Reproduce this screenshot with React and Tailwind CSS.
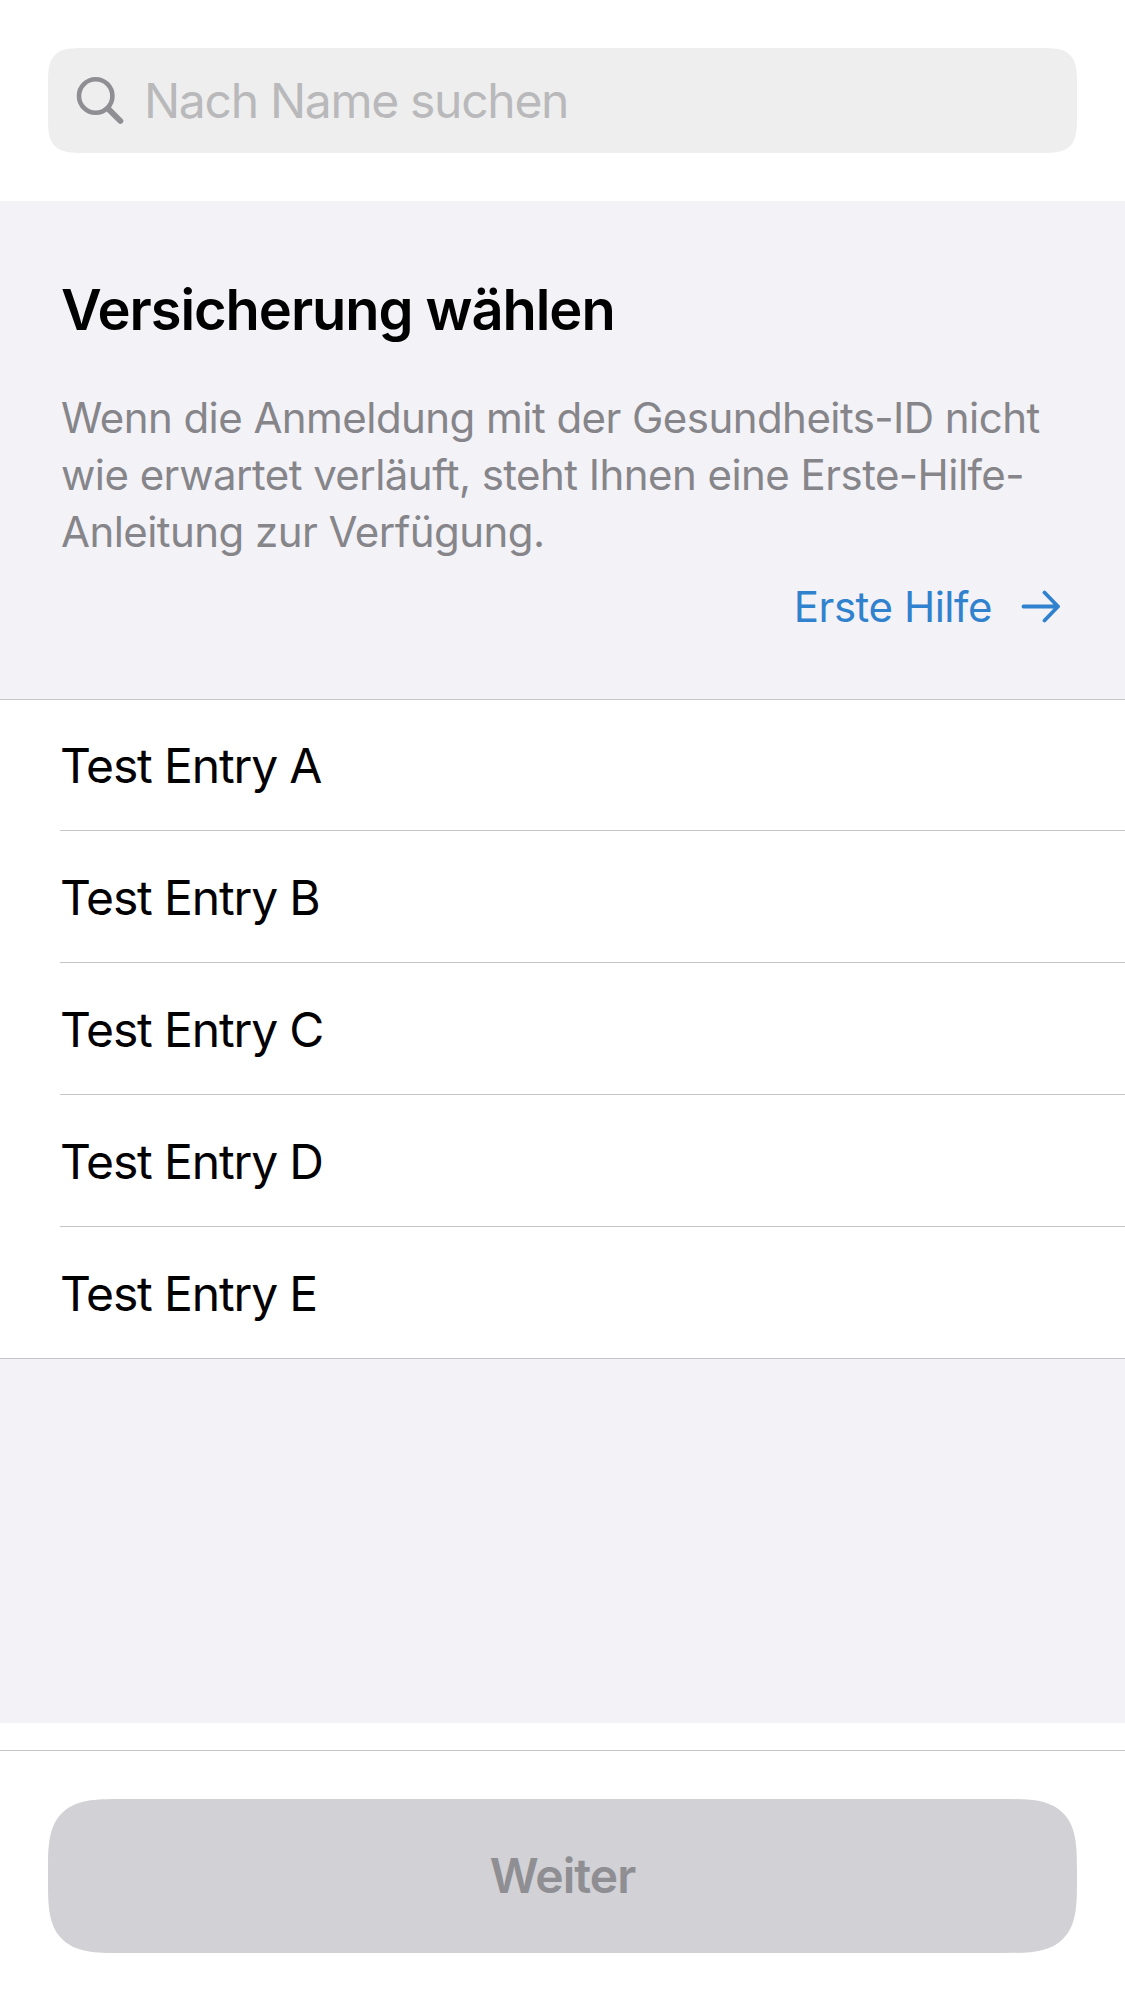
import React from "react";

const entries = ["A", "B", "C", "D", "E"];

export default function App() {
  return (
    <div className="flex h-[2001px] w-[1125px] flex-col overflow-hidden bg-white font-['Inter',sans-serif] text-black">
      <header className="h-[201px] shrink-0 px-12 pt-12">
        <div className="flex h-[105px] items-center rounded-[24px] bg-[#eeeeee] pl-[27px] supports-[corner-shape:squircle]:rounded-[36px] [corner-shape:superellipse(1.7)]">
          <svg className="h-[50px] w-[50px]" viewBox="0 0 50 50" fill="none" stroke="#8e8e93" strokeWidth="4.6" strokeLinecap="round">
            <circle cx="20.7" cy="20" r="16.7" />
            <path d="M33 32.6L45.4 45" strokeWidth="5.8" />
          </svg>
          <span className="ml-[19px] pt-px text-[48px] tracking-[-1.3px] text-[#b9b9bb]">Nach Name suchen</span>
        </div>
      </header>
      <main className="flex h-[1522px] shrink-0 flex-col bg-[#f2f2f7]">
        <section className="flex h-[498px] shrink-0 flex-col px-[61px] pt-[74px]">
          <h1 className="text-[56px] leading-[70px] font-semibold tracking-[-1.05px]">Versicherung wählen</h1>
          <p className="mt-[44px] text-[42px] leading-[57px] tracking-[-0.55px] whitespace-nowrap text-[#86858a]">
            Wenn die Anmeldung mit der Gesundheits-ID nicht<br />wie erwartet verläuft, steht Ihnen eine Erste-Hilfe-<br />Anleitung zur Verfügung.
          </p>
          <a className="mt-[18px] mr-[3px] flex items-center justify-end gap-[29px] text-[42px] leading-[57px] tracking-[-0.45px] text-[#3182ce]">
            <span>Erste Hilfe</span>
            <svg className="h-[34px] w-[40px]" viewBox="0 0 40 34" fill="none" stroke="currentColor" strokeWidth="3.8" strokeLinecap="round" strokeLinejoin="round">
              <path d="M2.5 16.5H37M23.5 2.5L37 16.5L23.5 30.5" />
            </svg>
          </a>
        </section>
        <ul className="border-y border-[#c6c6c8] bg-white pl-[60px]">
          {entries.map((name) => (
            <li key={name} className="flex h-[132px] items-center border-b border-[#c6c6c8] pt-[2px] text-[48px] tracking-[-1.15px] first:h-[131px] last:h-[131px] last:border-b-0">Test Entry {name}</li>
          ))}
        </ul>
      </main>
      <footer className="mt-[27px] h-[251px] border-t border-[#c6c6c8] px-12 pt-12">
        <button className="h-[154px] w-full rounded-[48px] bg-[#d1d1d6] text-[48px] font-semibold tracking-[-1px] text-[#8e8e93] supports-[corner-shape:squircle]:rounded-[73px] [corner-shape:superellipse(1.7)]">Weiter</button>
      </footer>
    </div>
  );
}
